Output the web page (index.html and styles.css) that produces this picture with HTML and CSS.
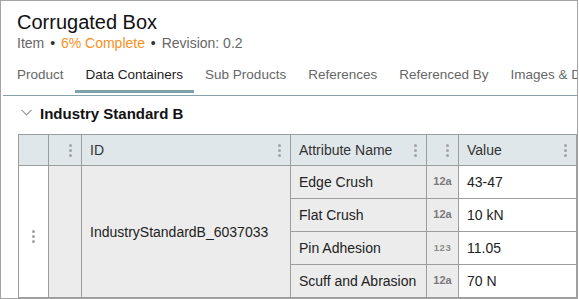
FILE: index.html
```html
<!DOCTYPE html>
<html lang="en">
<head>
  <meta charset="UTF-8">
  <meta name="viewport" content="width=device-width, initial-scale=1.0">
  <title>Corrugated Box</title>
  <link rel="stylesheet" href="styles.css">
</head>
<body>
  <div class="panel">
    <header class="item-head">
      <h1 class="item-title">Corrugated Box</h1>
      <div class="item-meta">Item <span class="dot">&bull;</span> <span class="progress">6% Complete</span> <span class="dot">&bull;</span> Revision: 0.2</div>
    </header>

    <nav class="tabs">
      <a class="tab">Product</a>
      <a class="tab active">Data Containers</a>
      <a class="tab">Sub Products</a>
      <a class="tab">References</a>
      <a class="tab">Referenced By</a>
      <a class="tab">Images &amp; Documents</a>
    </nav>

    <section class="data-section">
      <div class="section-head">
        <svg class="chevron" width="11" height="7" viewBox="0 0 11 7">
          <polyline points="0.5,0.8 5.5,5.8 10.5,0.8" fill="none" stroke="#9a9a9a" stroke-width="1.2" />
        </svg>
        <h2 class="section-title">Industry Standard B</h2>
      </div>

      <table class="grid">
        <colgroup>
          <col style="width:30px">
          <col style="width:33px">
          <col style="width:209px">
          <col style="width:136px">
          <col style="width:32px">
          <col style="width:118px">
        </colgroup>
        <thead>
          <tr>
            <th></th>
            <th><div class="th-inner"><span></span><span class="kebab"><i></i><i></i><i></i></span></div></th>
            <th><div class="th-inner"><span>ID</span><span class="kebab"><i></i><i></i><i></i></span></div></th>
            <th><div class="th-inner"><span>Attribute Name</span><span class="kebab"><i></i><i></i><i></i></span></div></th>
            <th><div class="th-inner"><span></span><span class="kebab"><i></i><i></i><i></i></span></div></th>
            <th><div class="th-inner"><span>Value</span><span class="kebab"><i></i><i></i><i></i></span></div></th>
          </tr>
        </thead>
        <tbody>
          <tr>
            <td rowspan="4" class="row-handle"><span class="kebab"><i></i><i></i><i></i></span></td>
            <td rowspan="4" class="muted"></td>
            <td rowspan="4" class="muted">IndustryStandardB_6037033</td>
            <td class="muted">Edge Crush</td>
            <td class="muted type">12a</td>
            <td>43-47</td>
          </tr>
          <tr>
            <td class="muted">Flat Crush</td>
            <td class="muted type">12a</td>
            <td>10 kN</td>
          </tr>
          <tr>
            <td class="muted">Pin Adhesion</td>
            <td class="muted type num">123</td>
            <td>11.05</td>
          </tr>
          <tr>
            <td class="muted">Scuff and Abrasion</td>
            <td class="muted type">12a</td>
            <td>70 N</td>
          </tr>
        </tbody>
      </table>
    </section>
  </div>
</body>
</html>
```

FILE: styles.css
```css
* {
  box-sizing: border-box;
}

body {
  margin: 0;
  font-family: "Liberation Sans", Arial, sans-serif;
  background-color: #fff;
  color: #222;
}

.panel {
  width: 578px;
  height: 299px;
  border: 1px solid #a3a3a3;
  overflow: hidden;
}

/* Item header */
.item-head {
  padding: 9px 0 0 16px;
}

.item-title {
  margin: 0;
  font-size: 20px;
  font-weight: normal;
  line-height: 24px;
  color: #111;
}

.item-meta {
  font-size: 14px;
  line-height: 18px;
  color: #666;
}

.item-meta .dot {
  margin: 0 2px;
  color: #333;
}

.item-meta .progress {
  color: #f7901e;
}

/* Tabs */
.tabs {
  display: flex;
  margin-left: 2px;
  padding-left: 3px;
  border-bottom: 1px solid #86a3aa;
  overflow: hidden;
}

.tab {
  flex-shrink: 0;
  padding: 14px 11px 6px;
  margin-bottom: 2px;
  font-size: 13.5px;
  line-height: 18px;
  color: #666;
  white-space: nowrap;
  border-bottom: 3px solid transparent;
}

.tab.active {
  color: #222;
  border-bottom-color: #7fa2aa;
}

/* Data container section */
.data-section {
  padding: 8px 0 0 17px;
}

.section-head {
  display: flex;
  align-items: center;
  gap: 8px;
  padding-left: 3px;
}

.chevron {
  margin-bottom: 3px;
}

.section-title {
  margin: 0;
  font-size: 15px;
  font-weight: bold;
  line-height: 20px;
  color: #111;
}

.grid {
  margin-top: 10px;
  width: 559px;
  border-collapse: collapse;
  table-layout: fixed;
  font-size: 14px;
}

.grid th,
.grid td {
  border: 1px solid #9d9d9d;
  padding: 0 8px;
  text-align: left;
  vertical-align: middle;
  white-space: nowrap;
  overflow: hidden;
}

.grid th {
  height: 31px;
  padding-right: 9px;
  background-color: #dfe7ea;
  font-weight: normal;
  color: #333;
}

.grid tbody tr {
  height: 33px;
}

.grid td {
  background-color: #fff;
  color: #222;
}

.grid td.muted {
  background-color: #ececec;
}

.th-inner {
  display: flex;
  align-items: center;
  justify-content: space-between;
}

.kebab {
  display: inline-flex;
  flex-direction: column;
  gap: 2px;
}

.kebab i {
  display: block;
  width: 3px;
  height: 3px;
  border-radius: 50%;
  background-color: #a2a2a2;
}

.grid td.row-handle {
  text-align: center;
  padding: 0;
}

.grid td.type {
  padding: 0 0 2px;
  text-align: center;
  font-size: 11px;
  font-weight: bold;
  color: #7a7a7a;
}

.grid td.type.num {
  font-size: 9.5px;
  letter-spacing: 0.5px;
  color: #8a8a8a;
}
```
